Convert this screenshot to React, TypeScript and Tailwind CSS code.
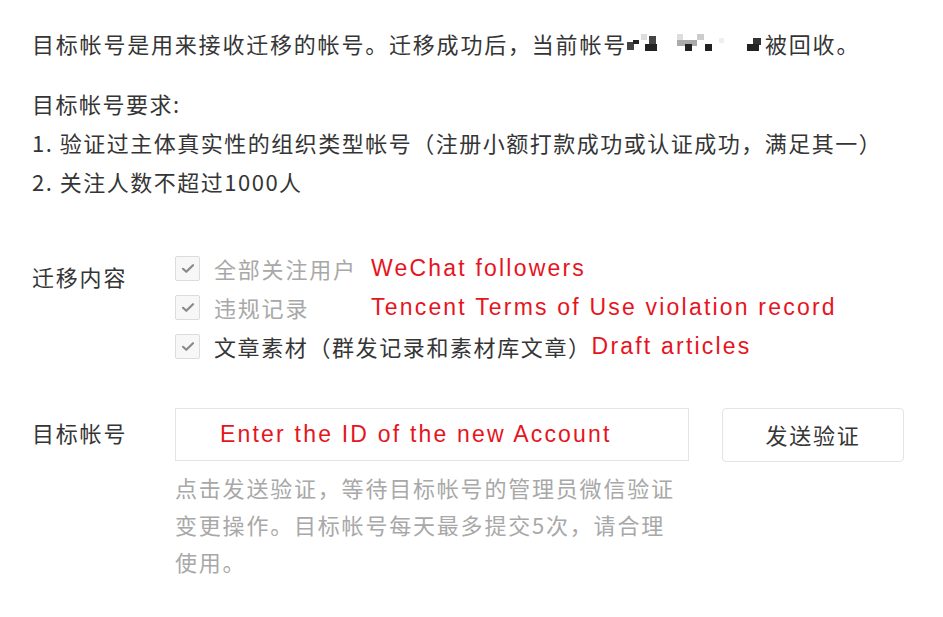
import React from "react";

const Check = () => (
  <span className="w-[25px] h-[25px] border border-[#dcdcdc] rounded-[2px] bg-[#f7f7f7] flex items-center justify-center shrink-0">
    <svg width="14" height="11" viewBox="0 0 14 11">
      <path d="M2 5.8 L5.3 8.8 L12 2.2" fill="none" stroke="#8a8a8a" strokeWidth="2.2" strokeLinecap="round" strokeLinejoin="round" />
    </svg>
  </span>
);

const Blur = () => (
  <span className="inline-block h-[22px] mr-[2px] align-[-3px] relative w-[136px]">
    <span className="absolute left-[0px] top-[8px] w-[7px] h-[8px] bg-[#444]" />
    <span className="absolute left-[6px] top-[6px] w-[6px] h-[4px] bg-[#222]" />
    <span className="absolute left-[14px] top-[0px] w-[6px] h-[6px] bg-[#ddd]" />
    <span className="absolute left-[22px] top-[2px] w-[7px] h-[8px] bg-[#444]" />
    <span className="absolute left-[18px] top-[10px] w-[12px] h-[7px] bg-[#222]" />
    <span className="absolute left-[50px] top-[0px] w-[6px] h-[6px] bg-[#ddd]" />
    <span className="absolute left-[50px] top-[6px] w-[20px] h-[6px] bg-[#aaa]" />
    <span className="absolute left-[58px] top-[10px] w-[7px] h-[7px] bg-[#222]" />
    <span className="absolute left-[70px] top-[0px] w-[7px] h-[6px] bg-[#ccc]" />
    <span className="absolute left-[78px] top-[10px] w-[7px] h-[7px] bg-[#222]" />
    <span className="absolute left-[92px] top-[4px] w-[5px] h-[5px] bg-[#eee]" />
    <span className="absolute left-[126px] top-[4px] w-[8px] h-[7px] bg-[#333]" />
    <span className="absolute left-[120px] top-[10px] w-[12px] h-[7px] bg-[#222]" />
  </span>
);

export default function App() {
  const red = "text-[#e6141e] text-[23px] tracking-[2.2px]";
  const lat = { fontFamily: '"Liberation Sans", Arial, sans-serif' };
  return (
    <div
      className="w-[943px] h-[617px] bg-white text-[#353535] pl-[32px] pt-[28px]"
      style={{ fontFamily: '"Noto Sans CJK SC", "Noto Sans", sans-serif' }}
    >
      <div className="text-[22px] leading-[30px] tracking-[1.8px] whitespace-nowrap">
        目标帐号是用来接收迁移的帐号。迁移成功后，当前帐号
        <Blur />
        被回收。
      </div>
      <div className="mt-[26px] text-[22px] leading-[39px] tracking-[1.5px] whitespace-nowrap">
        <div>目标帐号要求:</div>
        <div>1. 验证过主体真实性的组织类型帐号（注册小额打款成功或认证成功，满足其一）</div>
        <div>2. 关注人数不超过1000人</div>
      </div>

      <div className="mt-[52px] flex text-[22px] tracking-[1.8px]">
        <div className="w-[143px] pt-[8px] leading-[30px]">迁移内容</div>
        <div className="flex flex-col gap-[9px]">
          <div className="flex items-center h-[30px]">
            <Check />
            <span className="ml-[14px] w-[157px] text-[#a8a8a8]">全部关注用户</span>
            <span className={red} style={lat}>WeChat followers</span>
          </div>
          <div className="flex items-center h-[30px]">
            <Check />
            <span className="ml-[14px] w-[157px] text-[#a8a8a8]">违规记录</span>
            <span className={red} style={lat}>Tencent Terms of Use violation record</span>
          </div>
          <div className="flex items-center h-[30px]">
            <Check />
            <span className="ml-[14px] text-[#353535] tracking-[1.6px]">文章素材（群发记录和素材库文章）</span>
            <span className={red} style={lat}>Draft articles</span>
          </div>
        </div>
      </div>

      <div className="mt-[47px] flex text-[22px] tracking-[1.8px]">
        <div className="w-[143px] pt-[9px] leading-[30px]">目标帐号</div>
        <div className="flex flex-col">
          <div className="flex">
            <div className="w-[514px] h-[53px] border border-[#e4e4e4] flex items-center pl-[44px]">
              <span className={red} style={lat}>Enter the ID of the new Account</span>
            </div>
            <div className="ml-[33px] w-[182px] h-[54px] border border-[#e4e4e4] rounded-[4px] flex items-center justify-center text-[#353535] pb-[2px]">
              发送验证
            </div>
          </div>
          <div className="mt-[7px] w-[506px] text-[#a8a8a8] leading-[37px]">
            点击发送验证，等待目标帐号的管理员微信验证变更操作。目标帐号每天最多提交5次，请合理使用。
          </div>
        </div>
      </div>
    </div>
  );
}
